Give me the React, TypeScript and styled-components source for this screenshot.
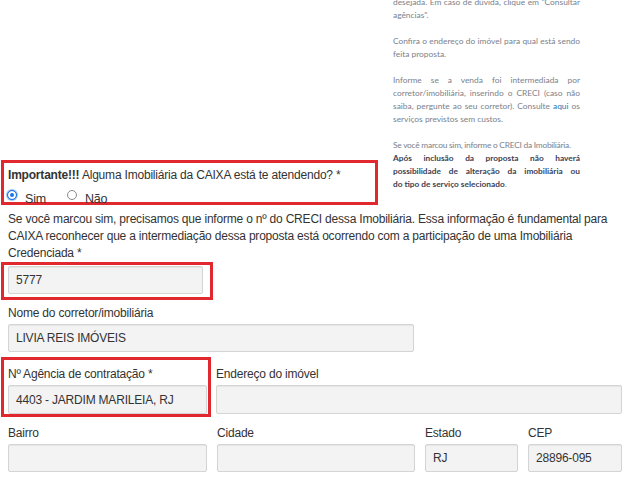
import React from 'react';
import styled, { createGlobalStyle } from 'styled-components';

const GlobalStyle = createGlobalStyle`
  html, body {
    margin: 0;
    padding: 0;
    background: #ffffff;
    overflow: hidden;
  }
  body {
    font-family: 'Liberation Sans', Arial, sans-serif;
    font-size: 12px;
    letter-spacing: -0.2px;
    color: #333333;
  }
`;

const red = '#e0282e';

const Page = styled.div`
  width: 640px;
  height: 480px;
  box-sizing: border-box;
  padding: 0 18px 0 8px;
  overflow: hidden;
`;

const TopRow = styled.div`
  display: flex;
  align-items: flex-end;
  height: 210px;
  margin-top: -5px;
`;

const QuestionBox = styled.div`
  box-sizing: border-box;
  width: 377px;
  height: 45px;
  margin-left: -7px;
  padding: 4px 4px 0 4px;
  border: 3px solid ${red};
  flex-shrink: 0;
`;

const QuestionText = styled.div`
  line-height: 17px;
  white-space: nowrap;

  strong {
    font-weight: bold;
  }
`;

const RadioRow = styled.div`
  display: flex;
  align-items: flex-start;
  height: 18px;
`;

const RadioOption = styled.label<{ $gap?: number }>`
  display: flex;
  align-items: flex-start;
  margin-right: ${({ $gap }) => $gap ?? 0}px;
  font-size: 12.5px;
  line-height: 17px;

  > span:last-child {
    margin-top: 7px;
  }
`;

const RadioDot = styled.span<{ $checked?: boolean }>`
  box-sizing: border-box;
  width: 10px;
  height: 10px;
  margin: 6px 8px 0 -1px;
  border-radius: 50%;
  border: 1px solid ${({ $checked }) => ($checked ? '#1a73e8' : '#8a8a8a')};
  background: ${({ $checked }) => ($checked ? '#1a73e8' : '#ffffff')};
  box-shadow: ${({ $checked }) =>
    $checked ? 'inset 0 0 0 2px #ffffff, 0 0 0 1px #a8c7f0' : 'none'};
`;

const Sidebar = styled.div`
  width: 187px;
  margin: 0 0 14px 15px;
  font-family: Lato, 'Open Sans', sans-serif;
  font-size: 8.4px;
  letter-spacing: 0;
  line-height: 13px;
  color: #7b818c;
  flex-shrink: 0;
`;

const SideParagraph = styled.div`
  margin: 0 0 13px 0;

  &:last-child {
    margin: 0;
  }

  b {
    color: #3c4152;
    font-weight: 700;
    font-size: 8.3px;
  }

  a {
    color: #2a7ab8;
    text-decoration: none;
  }
`;

const SideLine = styled.div<{ $justify?: boolean; $tight?: boolean }>`
  height: 13px;
  text-align: ${({ $justify }) => ($justify ? 'justify' : 'left')};
  text-align-last: ${({ $justify }) => ($justify ? 'justify' : 'auto')};
  white-space: ${({ $tight }) => ($tight ? 'nowrap' : 'normal')};
  letter-spacing: ${({ $tight }) => ($tight ? '-0.25px' : '0')};
`;

const Notice = styled.div`
  margin-top: 6px;
  line-height: 17px;
  white-space: nowrap;
`;

const InputFrame = styled.div`
  box-sizing: border-box;
  width: 212px;
  margin-left: -7px;
  padding: 1px 7px 3px 4px;
  border: 3px solid ${red};
`;

const Field = styled.div<{ $top?: number }>`
  display: flex;
  flex-direction: column;
  margin-top: ${({ $top }) => $top ?? 0}px;
`;

const Label = styled.div`
  line-height: 17px;
  margin-bottom: 2px;
  white-space: nowrap;
`;

const TextBox = styled.div<{ $width?: number; $height?: number }>`
  box-sizing: border-box;
  width: ${({ $width }) => ($width ? `${$width}px` : '100%')};
  height: ${({ $height }) => $height ?? 28}px;
  padding: 0 7px;
  display: flex;
  align-items: center;
  border: 1px solid #d4d4d4;
  border-radius: 2px;
  background: #f3f3f3;
  box-shadow: inset 0 1px 1px rgba(0, 0, 0, 0.06);
  color: #333333;
  white-space: nowrap;
`;

const FieldRow = styled.div<{ $columns: string; $top: number; $gap: number }>`
  display: grid;
  grid-template-columns: ${({ $columns }) => $columns};
  column-gap: ${({ $gap }) => $gap}px;
  margin-top: ${({ $top }) => $top}px;
`;

const HighlightCell = styled.div`
  padding: 6px 1px 0 4px;
  margin: -9px -4px -3px -7px;
  border: 3px solid ${red};
`;

const App: React.FC = () => (
  <Page>
    <GlobalStyle />
    <TopRow>
      <QuestionBox>
        <QuestionText>
          <strong>Importante!!!</strong> Alguma Imobiliária da CAIXA está te atendendo? *
        </QuestionText>
        <RadioRow>
          <RadioOption $gap={22}>
            <RadioDot $checked />
            <span>Sim</span>
          </RadioOption>
          <RadioOption>
            <RadioDot />
            <span>Não</span>
          </RadioOption>
        </RadioRow>
      </QuestionBox>
      <Sidebar>
        <SideParagraph>
          <SideLine $justify>desejada. Em caso de dúvida, clique em "Consultar</SideLine>
          <SideLine>agências".</SideLine>
        </SideParagraph>
        <SideParagraph>
          <SideLine $justify>Confira o endereço do imóvel para qual está sendo</SideLine>
          <SideLine>feita proposta.</SideLine>
        </SideParagraph>
        <SideParagraph>
          <SideLine $justify>Informe se a venda foi intermediada por</SideLine>
          <SideLine $justify>corretor/imobiliária, inserindo o CRECI (caso não</SideLine>
          <SideLine $justify>
            saiba, pergunte ao seu corretor). Consulte <a href="#">aqui</a> os
          </SideLine>
          <SideLine>serviços previstos sem custos.</SideLine>
        </SideParagraph>
        <SideParagraph>
          <SideLine $tight>Se você marcou sim, informe o CRECI da Imobiliária.</SideLine>
          <SideLine $justify>
            <b>Após inclusão da proposta não haverá</b>
          </SideLine>
          <SideLine $justify>
            <b>possibilidade de alteração da imobiliária ou</b>
          </SideLine>
          <SideLine>
            <b>do tipo de serviço selecionado</b>.
          </SideLine>
        </SideParagraph>
      </Sidebar>
    </TopRow>

    <Notice>
      Se você marcou sim, precisamos que informe o nº do CRECI dessa Imobiliária. Essa
      informação é fundamental para
      <br />
      CAIXA reconhecer que a intermediação dessa proposta está ocorrendo com a participação de
      uma Imobiliária
      <br />
      Credenciada *
    </Notice>

    <InputFrame>
      <TextBox $width={195}>5777</TextBox>
    </InputFrame>

    <Field $top={5}>
      <Label>Nome do corretor/imobiliária</Label>
      <TextBox $width={406}>LIVIA REIS IMÓVEIS</TextBox>
    </Field>

    <FieldRow $columns="199px 406px" $gap={9} $top={14}>
      <HighlightCell>
        <Field>
          <Label>Nº Agência de contratação *</Label>
          <TextBox $height={29}>4403 - JARDIM MARILEIA, RJ</TextBox>
        </Field>
      </HighlightCell>
      <Field>
        <Label>Endereço do imóvel</Label>
        <TextBox $height={29} />
      </Field>
    </FieldRow>

    <FieldRow $columns="199px 198px 93px 94px" $gap={10} $top={11}>
      <Field>
        <Label>Bairro</Label>
        <TextBox />
      </Field>
      <Field>
        <Label>Cidade</Label>
        <TextBox />
      </Field>
      <Field>
        <Label>Estado</Label>
        <TextBox>RJ</TextBox>
      </Field>
      <Field>
        <Label>CEP</Label>
        <TextBox>28896-095</TextBox>
      </Field>
    </FieldRow>
  </Page>
);

export default App;
